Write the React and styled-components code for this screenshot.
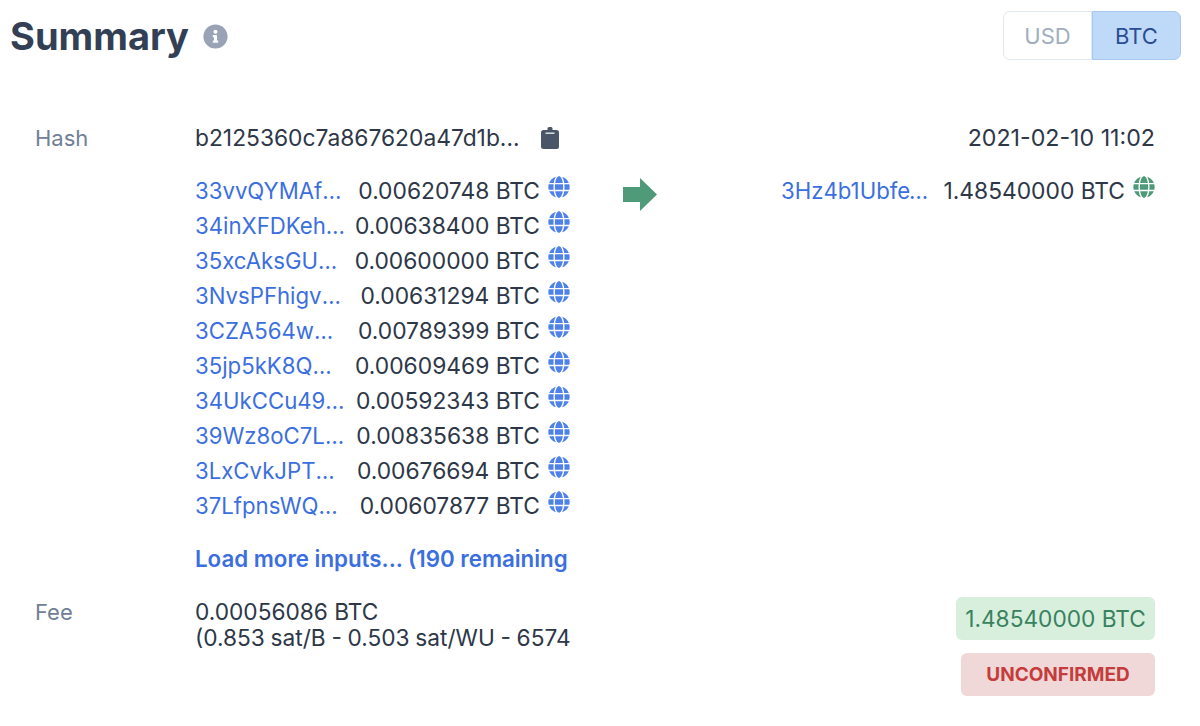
import React from 'react'
import styled, { createGlobalStyle } from 'styled-components'
import { FaGlobe, FaInfoCircle } from 'react-icons/fa'

const GlobalStyle = createGlobalStyle`
  html, body {
    margin: 0;
    background: #fff;
    font-family: Inter, "Liberation Sans", sans-serif;
    color: #2d3748;
  }
`

const Page = styled.div`
  width: 1200px;
  height: 726px;
  overflow: hidden;
  box-sizing: border-box;
  padding: 11px 45px 0 10px;
`

const Header = styled.div`
  display: flex;
  justify-content: space-between;
  align-items: flex-start;
  height: 114px;
  margin-right: -26px;
`

const TitleWrap = styled.div`
  display: flex;
  align-items: center;
  gap: 14px;
  height: 50px;
`

const Title = styled.h1`
  margin: 0;
  font-size: 38px;
  line-height: 50px;
  font-weight: 700;
  color: #333f55;
`

const InfoIcon = styled(FaInfoCircle)`
  width: 25px;
  height: 25px;
  color: #9aa2b6;
`

const Toggle = styled.div`
  display: flex;
  height: 49px;
`

const ToggleButton = styled.div`
  width: 89px;
  box-sizing: border-box;
  display: flex;
  align-items: center;
  justify-content: center;
  font-size: 22px;
  border: 1.5px solid ${p => (p.$active ? '#a9c8ee' : '#e2e8f0')};
  border-radius: ${p => (p.$active ? '0 7px 7px 0' : '7px 0 0 7px')};
  background: ${p => (p.$active ? '#bfd9f8' : '#fff')};
  color: ${p => (p.$active ? '#2a4d92' : '#a0aec0')};
`

const Body = styled.div`
  display: grid;
  grid-template-columns: 159px 375px 211px minmax(0, 1fr);
  padding-left: 26px;
`

const Label = styled.div`
  font-size: 22px;
  line-height: 26px;
  margin-left: -1px;
  color: #718096;
`

const HashRow = styled.div`
  display: flex;
  align-items: center;
  gap: 21px;
  font-size: 22.8px;
  line-height: 26px;
  white-space: nowrap;
`

const DateText = styled.div`
  grid-column: 3 / 5;
  text-align: right;
  font-size: 23.2px;
  line-height: 26px;
`

const Inputs = styled.div`
  padding-top: 22px;
  overflow: hidden;
`

const TxRow = styled.div`
  display: flex;
  align-items: center;
  height: 35px;
`

const Address = styled.a`
  flex: 1;
  min-width: 0;
  overflow: hidden;
  text-overflow: ellipsis;
  white-space: nowrap;
  font-size: 22.2px;
  color: #3b6fe0;
  margin-right: 8px;
`

const Amount = styled.span`
  white-space: nowrap;
  font-size: 22.8px;
`

const Globe = styled(FaGlobe)`
  flex: none;
  width: 22px;
  height: 22px;
  margin: -7px 0 0 8px;
  color: ${p => p.$color};
`

const ArrowCell = styled.div`
  padding: 27px 0 0 53px;
`

const Outputs = styled.div`
  padding-top: 22px;
`

const LoadMore = styled.div`
  margin-top: 21px;
  width: 373px;
  font-size: 22.3px;
  font-weight: 600;
  line-height: 30px;
  color: #3b6fe0;
  white-space: nowrap;
  overflow: hidden;
`

const FeeLabel = styled(Label)`
  margin-top: 25px;
`

const FeeValue = styled.div`
  margin-top: 25px;
  font-size: 22.7px;
  line-height: 26px;
  white-space: nowrap;
  overflow: hidden;
`

const FeeDetail = styled.div`
  word-spacing: -0.7px;
`

const Badges = styled.div`
  grid-column: 3 / 5;
  display: flex;
  flex-direction: column;
  align-items: flex-end;
  gap: 13px;
  margin-top: 23px;
`

const Badge = styled.div`
  box-sizing: border-box;
  height: 43px;
  width: ${p => p.$width}px;
  display: flex;
  align-items: center;
  justify-content: center;
  border-radius: 6px;
  font-size: ${p => p.$size}px;
  font-weight: ${p => p.$weight};
  background: ${p => p.$bg};
  color: ${p => p.$color};
  white-space: nowrap;
`

const inputs = [
  ['33vvQYMAfWZkLp9sW2xTn4RbHcE7uJ', '0.00620748 BTC'],
  ['34inXFDKehq7Ws2mVb9TnY5RpLcA3u', '0.00638400 BTC'],
  ['35xcAksGUW8PfT3nQe6LwZ2HdRm4Vb', '0.00600000 BTC'],
  ['3NvsPFhigvK2mYt7RqW9xLc5DnB8eJ', '0.00631294 BTC'],
  ['3CZA564wWq9LmX2vHs7RkP4nYbE6cG', '0.00789399 BTC'],
  ['35jp5kK8QWT3nVw7ZcL9mRy2HdF6bE', '0.00609469 BTC'],
  ['34UkCCu49Rn7TqW2xLs5VmY8cHb3eP', '0.00592343 BTC'],
  ['39Wz8oC7LWV4nTq2RxK9mYs5HdB6eG', '0.00835638 BTC'],
  ['3LxCvkJPTWq7n2mR9xYs5HcL4dV8bE', '0.00676694 BTC'],
  ['37LfpnsWQWx3T7Vm2RyK9cHs5dB4eL', '0.00607877 BTC'],
]

const BLUE = '#4f82e8'
const GREEN = '#4f9a78'

function ClipboardIcon() {
  return (
    <svg width="18" height="22" viewBox="0 0 18 22">
      <rect x="0" y="3" width="18" height="19" rx="2.5" fill="#4a5568" />
      <rect x="6.5" y="0" width="5" height="4" rx="1.5" fill="#4a5568" />
      <rect x="4.5" y="5.5" width="9" height="1.4" fill="#e2e8f0" />
    </svg>
  )
}

function App() {
  return (
    <Page>
      <GlobalStyle />
      <Header>
        <TitleWrap>
          <Title>Summary</Title>
          <InfoIcon />
        </TitleWrap>
        <Toggle>
          <ToggleButton>USD</ToggleButton>
          <ToggleButton $active>BTC</ToggleButton>
        </Toggle>
      </Header>
      <Body>
        <Label>Hash</Label>
        <HashRow>
          b2125360c7a867620a47d1b...
          <ClipboardIcon />
        </HashRow>
        <DateText>2021-02-10 11:02</DateText>

        <div />
        <Inputs>
          {inputs.map(([address, amount]) => (
            <TxRow key={address}>
              <Address>{address}</Address>
              <Amount>{amount}</Amount>
              <Globe $color={BLUE} />
            </TxRow>
          ))}
          <LoadMore>Load more inputs... (190 remaining)</LoadMore>
        </Inputs>
        <ArrowCell>
          <svg width="34" height="33" viewBox="0 0 34 33">
            <polygon points="0,9 17,9 17,0 34,16.5 17,33 17,24 0,24" fill={GREEN} />
          </svg>
        </ArrowCell>
        <Outputs>
          <TxRow>
            <Address>3Hz4b1UbfeW7nQw2xLm9RyK5cVs8dE</Address>
            <Amount>1.48540000 BTC</Amount>
            <Globe $color={GREEN} />
          </TxRow>
        </Outputs>

        <FeeLabel>Fee</FeeLabel>
        <FeeValue>
          0.00056086 BTC
          <FeeDetail>(0.853 sat/B - 0.503 sat/WU - 6574 bytes)</FeeDetail>
        </FeeValue>
        <Badges>
          <Badge $width={199} $size={22.7} $weight={400} $bg="#d8efdd" $color="#38825f">
            1.48540000 BTC
          </Badge>
          <Badge $width={194} $size={19} $weight={700} $bg="#f0d8d8" $color="#c53c3c">
            UNCONFIRMED
          </Badge>
        </Badges>
      </Body>
    </Page>
  )
}

export default App
